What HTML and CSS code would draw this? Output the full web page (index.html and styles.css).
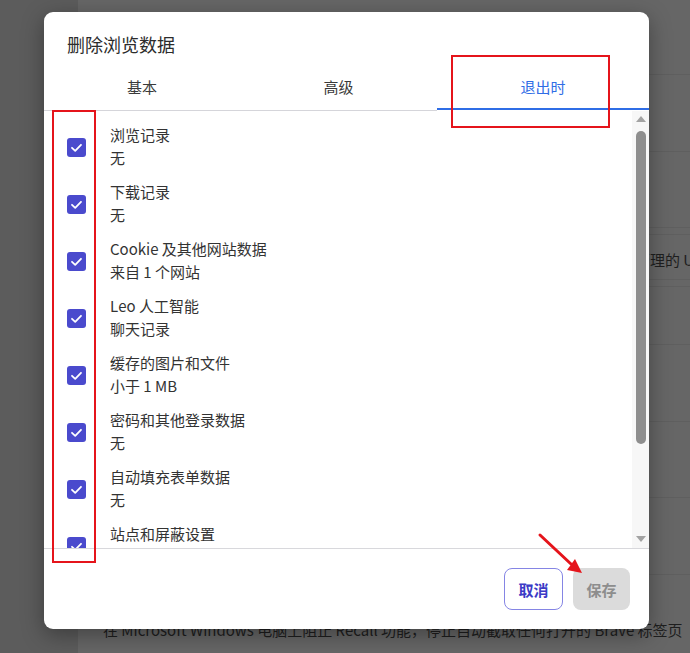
FILE: index.html
```html
<!DOCTYPE html>
<html lang="zh-CN">
<head>
<meta charset="utf-8">
<title>删除浏览数据</title>
<link rel="stylesheet" href="styles.css">
</head>
<body>
<div class="page">
  <div class="bg-row h75"></div>
  <div class="bg-row h77"></div>
  <div class="bg-row h76"></div>
  <div class="bg-row h7"></div>
  <div class="bg-row h45 bg-text">管理的 URL</div>
  <div class="bg-row h7"></div>
  <div class="bg-row h58"></div>
  <div class="bg-row h77"></div>
  <div class="bg-row h76"></div>
  <div class="bg-row h77"></div>
  <div class="bg-last">在 Microsoft Windows 电脑上阻止 Recall 功能，停止自动截取任何打开的 Brave 标签页</div>
</div>

<div class="dialog">
  <div class="title">删除浏览数据</div>
  <div class="tabs">
    <div class="tab tab1">基本</div>
    <div class="tab tab2">高级</div>
    <div class="tab active">退出时</div>
  </div>
  <div class="body">
    <div class="list">
      <div class="row"><span class="cb"><svg viewBox="0 0 19 19" width="19" height="19"><polyline points="5,9.8 8.2,12.8 14,6.8"/></svg></span><div class="text"><div class="label">浏览记录</div><div class="label">无</div></div></div>
      <div class="row"><span class="cb"><svg viewBox="0 0 19 19" width="19" height="19"><polyline points="5,9.8 8.2,12.8 14,6.8"/></svg></span><div class="text"><div class="label">下载记录</div><div class="label">无</div></div></div>
      <div class="row"><span class="cb"><svg viewBox="0 0 19 19" width="19" height="19"><polyline points="5,9.8 8.2,12.8 14,6.8"/></svg></span><div class="text"><div class="label">Cookie 及其他网站数据</div><div class="label">来自 1 个网站</div></div></div>
      <div class="row"><span class="cb"><svg viewBox="0 0 19 19" width="19" height="19"><polyline points="5,9.8 8.2,12.8 14,6.8"/></svg></span><div class="text"><div class="label">Leo 人工智能</div><div class="label">聊天记录</div></div></div>
      <div class="row"><span class="cb"><svg viewBox="0 0 19 19" width="19" height="19"><polyline points="5,9.8 8.2,12.8 14,6.8"/></svg></span><div class="text"><div class="label">缓存的图片和文件</div><div class="label">小于 1 MB</div></div></div>
      <div class="row"><span class="cb"><svg viewBox="0 0 19 19" width="19" height="19"><polyline points="5,9.8 8.2,12.8 14,6.8"/></svg></span><div class="text"><div class="label">密码和其他登录数据</div><div class="label">无</div></div></div>
      <div class="row"><span class="cb"><svg viewBox="0 0 19 19" width="19" height="19"><polyline points="5,9.8 8.2,12.8 14,6.8"/></svg></span><div class="text"><div class="label">自动填充表单数据</div><div class="label">无</div></div></div>
      <div class="row"><span class="cb"><svg viewBox="0 0 19 19" width="19" height="19"><polyline points="5,9.8 8.2,12.8 14,6.8"/></svg></span><div class="text"><div class="label">站点和屏蔽设置</div><div class="label">无</div></div></div>
    </div>
    <div class="sb">
      <svg class="sb-arrow" viewBox="0 0 10 6" width="10" height="6"><polygon points="0,6 5,0 10,6"/></svg>
      <div class="thumb"></div>
      <svg class="sb-arrow sb-down" viewBox="0 0 10 6" width="10" height="6"><polygon points="0,0 10,0 5,6"/></svg>
    </div>
  </div>
  <div class="footer">
    <button class="btn cancel">取消</button>
    <button class="btn save">保存</button>
  </div>
</div>

<div class="mark mark-left"></div>
<div class="mark mark-right"></div>
<svg class="arrow" viewBox="0 0 60 55" width="60" height="55">
  <line x1="10" y1="10" x2="41" y2="39"/>
  <polygon points="52,48 45,34 37,45"/>
</svg>
</body>
</html>
```

FILE: styles.css
```css
* { box-sizing: border-box; }
html, body { margin: 0; padding: 0; }
body {
  width: 690px;
  height: 653px;
  overflow: hidden;
  position: relative;
  background: #5c5c5c;
  font-family: "Noto Sans CJK SC", "Noto Sans", sans-serif;
}

/* background page under overlay */
.page {
  margin-left: 78px;
  height: 653px;
  background: #666666;
  display: flex;
  flex-direction: column;
  overflow: hidden;
}
.bg-row { flex: none; border-bottom: 1px solid #5f5f5f; }
.h75 { height: 75px; }
.h77 { height: 77px; }
.h76 { height: 76px; }
.h7 { height: 7px; }
.h45 { height: 45px; }
.h58 { height: 58px; }
.bg-text {
  padding: 6px 0 0 557px;
  font-size: 15px;
  line-height: 38px;
  color: #1e1e1e;
  white-space: nowrap;
}
.bg-last {
  padding: 44px 0 0 25px;
  font-size: 15px;
  line-height: 22px;
  color: #1e1e1e;
  white-space: nowrap;
}

/* dialog */
.dialog {
  position: absolute;
  left: 44px;
  top: 12px;
  width: 605px;
  height: 617px;
  background: #ffffff;
  border-radius: 9px;
  box-shadow: 0 6px 22px rgba(0, 0, 0, 0.35);
  display: flex;
  flex-direction: column;
  overflow: hidden;
}
.title {
  height: 54px;
  padding: 20px 0 0 23px;
  font-size: 18px;
  line-height: 24px;
  color: #2c2c2c;
}
.tabs {
  display: flex;
  align-items: flex-start;
  height: 45px;
  flex: none;
}
.tab {
  height: 45px;
  border-bottom: 1px solid #d5d5da;
  padding-top: 10px;
  text-align: center;
  font-size: 15px;
  line-height: 22px;
  color: #3a3a3a;
}
.tab1 { width: 196px; }
.tab2 { width: 197px; }
.tab.active {
  flex: 1;
  height: 44px;
  border-bottom: 2px solid #2f6de6;
  color: #2f6de6;
}

.body {
  display: flex;
  height: 438px;
  flex: none;
  border-bottom: 1px solid #d8d8dc;
}
.list {
  flex: 1;
  overflow: hidden;
  padding-top: 8px;
}
.row {
  height: 57px;
  display: flex;
  align-items: center;
  padding-left: 23px;
}
.cb {
  flex: none;
  width: 19px;
  height: 19px;
  border-radius: 3px;
  background: #4a4acd;
  margin-right: 24px;
  display: flex;
}
.cb polyline {
  fill: none;
  stroke: #ffffff;
  stroke-width: 1.8;
  stroke-linecap: round;
  stroke-linejoin: round;
}
.text { margin-top: -3px; }
.label {
  font-size: 15px;
  line-height: 23px;
  color: #333333;
  white-space: nowrap;
}

.sb {
  width: 17px;
  flex: none;
  background: #f7f7f7;
  display: flex;
  flex-direction: column;
  align-items: center;
  padding: 5px 0 6px 1px;
}
.sb-arrow { fill: #a3a3a3; flex: none; }
.thumb {
  width: 10px;
  height: 313px;
  margin-top: 9px;
  border-radius: 5px;
  background: #8e8e8e;
}
.sb-down { margin-top: auto; }

.footer {
  flex: 1;
  display: flex;
  justify-content: flex-end;
  gap: 10px;
  padding: 19px 19px 0 0;
}
.btn {
  height: 42px;
  border-radius: 8px;
  font-family: inherit;
  font-size: 15px;
  font-weight: 700;
  padding: 0;
  display: flex;
  align-items: center;
  justify-content: center;
}
.cancel {
  width: 59px;
  background: #ffffff;
  border: 1px solid #8585e4;
  color: #3b3bc6;
}
.save {
  width: 57px;
  background: #dbdbdb;
  border: none;
  color: #8d8d8d;
}

/* annotations */
.mark {
  position: absolute;
  border: 2px solid #e5141b;
}
.mark-left { left: 52px; top: 110px; width: 44px; height: 453px; }
.mark-right { left: 451px; top: 55px; width: 159px; height: 73px; }
.arrow {
  position: absolute;
  left: 530px;
  top: 525px;
}
.arrow line {
  stroke: #e5141b;
  stroke-width: 3;
  stroke-linecap: round;
}
.arrow polygon { fill: #e5141b; }
```
